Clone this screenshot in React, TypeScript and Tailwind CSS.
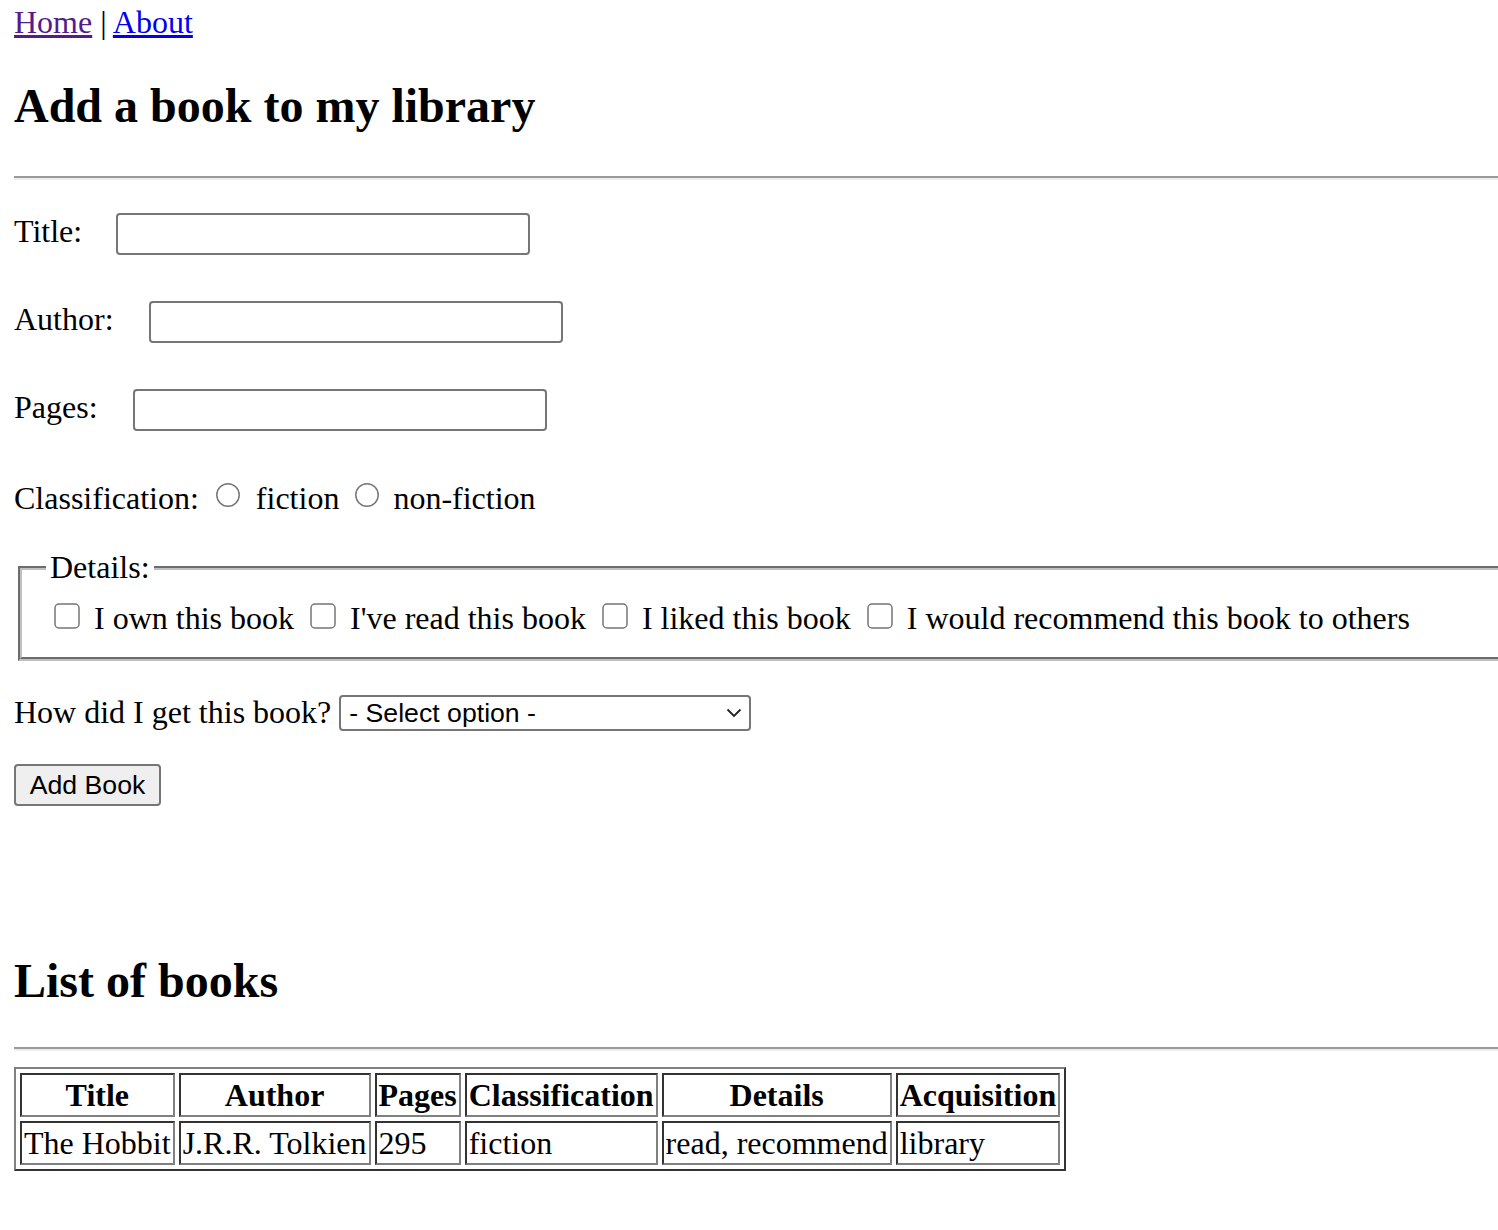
import React from "react";

function Radio({ className = "" }: { className?: string }) {
  return (
    <svg
      className={"block h-[24px] w-[24px] shrink-0 " + className}
      viewBox="0 0 24 24"
      aria-hidden="true"
    >
      <circle cx="12" cy="12" r="11.2" fill="#ffffff" stroke="#767676" strokeWidth="1.5" />
    </svg>
  );
}

function Checkbox({ className = "" }: { className?: string }) {
  return (
    <svg
      className={"block h-[26px] w-[26px] shrink-0 " + className}
      viewBox="0 0 26 26"
      aria-hidden="true"
    >
      <rect x="1" y="1" width="24" height="24" rx="4" fill="#ffffff" stroke="#767676" strokeWidth="1.5" />
    </svg>
  );
}

const books = [
  {
    title: "The Hobbit",
    author: "J.R.R. Tolkien",
    pages: "295",
    classification: "fiction",
    details: "read, recommend",
    acquisition: "library",
  },
];

const th =
  "border-2 border-t-[#333333] border-l-[#333333] border-b-[#808080] border-r-[#808080] p-[2px] text-center font-bold";
const td =
  "border-2 border-t-[#333333] border-l-[#333333] border-b-[#808080] border-r-[#808080] p-[2px] text-left font-normal";

export default function App() {
  return (
    <div className="min-h-[1230px] w-[1498px] overflow-hidden bg-white pl-[14px] pt-[4px] font-['Liberation_Serif',serif] text-[32px] leading-[37px] text-black">
      <div className="h-[37px] whitespace-pre">
        <a href="#" className="text-[#551a8b] underline">
          Home
        </a>
        {" | "}
        <a href="#" className="text-[#0000ee] underline">
          About
        </a>
      </div>

      <h1 className="mt-[37px] text-[48px] font-bold leading-[55px]">Add a book to my library</h1>
      <hr className="mt-[43px] h-[4px] border-0 border-t-2 border-b-2 border-t-[#9a9a9a] border-b-[#eeeeee]" />

      <form onSubmit={(e) => e.preventDefault()}>
        <div className="mt-[33px] flex h-[42px] items-start">
          <label>Title:</label>
          <input className="ml-[34px] h-[42px] w-[414px] rounded-[4px] border-2 border-[#767676] bg-white px-[4px] font-['Liberation_Sans',sans-serif] text-[26px] outline-none" />
        </div>
        <div className="mt-[46px] flex h-[42px] items-start">
          <label>Author:</label>
          <input className="ml-[35px] h-[42px] w-[414px] rounded-[4px] border-2 border-[#767676] bg-white px-[4px] font-['Liberation_Sans',sans-serif] text-[26px] outline-none" />
        </div>
        <div className="mt-[46px] flex h-[42px] items-start">
          <label>Pages:</label>
          <input className="ml-[35px] h-[42px] w-[414px] rounded-[4px] border-2 border-[#767676] bg-white px-[4px] font-['Liberation_Sans',sans-serif] text-[26px] outline-none" />
        </div>

        <div className="mt-[49px] flex h-[37px] items-start">
          <span>Classification:</span>
          <Radio className="ml-[17px] mt-[3px]" />
          <span className="ml-[16px]">fiction</span>
          <Radio className="ml-[16px] mt-[3px]" />
          <span className="ml-[14px]">non-fiction</span>
        </div>

        <fieldset className="ml-[4px] mr-[-16px] mt-[32px] min-w-0 border-4 border-[#c0c0c0] px-[24px] pb-[20px] pt-[14px] [border-style:groove]">
          <legend className="px-[4px]">Details:</legend>
          <div className="flex h-[37px] items-start whitespace-nowrap">
            <Checkbox className="ml-[8px] mt-[3px]" />
            <span className="ml-[14px]">I own this book</span>
            <Checkbox className="ml-[16px] mt-[3px]" />
            <span className="ml-[14px]">I've read this book</span>
            <Checkbox className="ml-[16px] mt-[3px]" />
            <span className="ml-[14px]">I liked this book</span>
            <Checkbox className="ml-[16px] mt-[3px]" />
            <span className="ml-[14px]">I would recommend this book to others</span>
          </div>
        </fieldset>

        <div className="mt-[33px] flex h-[37px] items-start">
          <span>How did I get this book?</span>
          <div className="ml-[8px] mt-[1px] flex h-[36px] w-[412px] items-center justify-between rounded-[4px] border-2 border-[#767676] bg-white pl-[8px] pr-[7px] font-['Liberation_Sans',sans-serif] text-[26.67px] leading-[30px]">
            <span>- Select option -</span>
            <svg className="block h-[10px] w-[16px]" viewBox="0 0 16 10" aria-hidden="true">
              <polyline points="1.5,1.5 8,8 14.5,1.5" fill="none" stroke="#222222" strokeWidth="1.8" />
            </svg>
          </div>
        </div>

        <button
          type="submit"
          className="mt-[33px] block h-[42px] w-[147px] rounded-[4px] border-2 border-[#767676] bg-[#efefef] font-['Liberation_Sans',sans-serif] text-[26.67px] leading-[30px] text-black"
        >
          Add Book
        </button>
      </form>

      <h2 className="mt-[147px] text-[48px] font-bold leading-[55px]">List of books</h2>
      <hr className="mt-[39px] h-[4px] border-0 border-t-2 border-b-2 border-t-[#9a9a9a] border-b-[#eeeeee]" />

      <table className="mt-[16px] border-separate border-spacing-[4px] border-2 border-t-[#808080] border-l-[#808080] border-b-[#333333] border-r-[#333333] leading-[36px]">
        <thead>
          <tr>
            <th className={th}>Title</th>
            <th className={th}>Author</th>
            <th className={th}>Pages</th>
            <th className={th}>Classification</th>
            <th className={th}>Details</th>
            <th className={th}>Acquisition</th>
          </tr>
        </thead>
        <tbody>
          {books.map((b) => (
            <tr key={b.title}>
              <td className={td}>{b.title}</td>
              <td className={td}>{b.author}</td>
              <td className={td}>{b.pages}</td>
              <td className={td}>{b.classification}</td>
              <td className={td}>{b.details}</td>
              <td className={td}>{b.acquisition}</td>
            </tr>
          ))}
        </tbody>
      </table>
    </div>
  );
}
